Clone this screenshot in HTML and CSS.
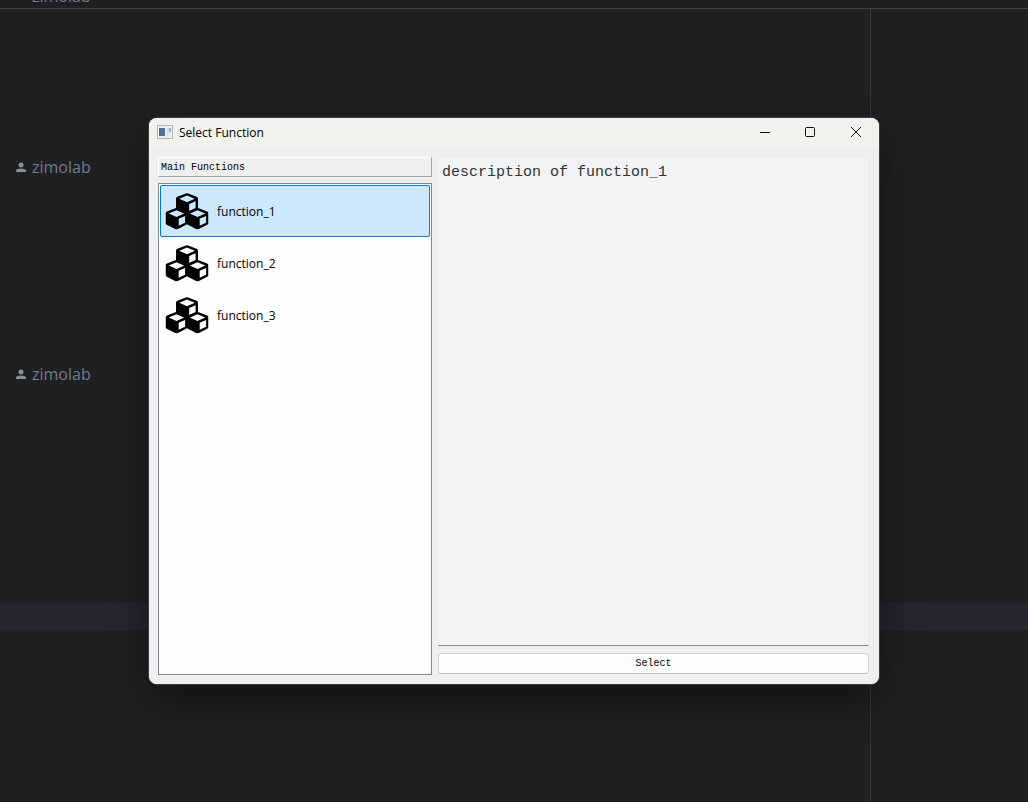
FILE: index.html
```html
<!DOCTYPE html>
<html lang="en">
<head>
<meta charset="utf-8">
<title>Select Function</title>
<link rel="stylesheet" href="styles.css">
</head>
<body>
<svg class="defs" aria-hidden="true">
  <symbol id="person" viewBox="0 0 10 10">
    <circle cx="5" cy="3" r="2.500"/>
    <path d="M0 10V8.600C0 7.100 2.600 6.400 5 6.400s5 .7 5 2.200V10z"/>
  </symbol>
  <symbol id="cube" viewBox="0 0 22 22">
    <path fill-rule="evenodd" d="M9.800 .4Q11 0 12.200 .4L20.600 3.700Q22 4.300 22 5.800V15Q22 16.400 20.700 17L12.400 21.200Q11 21.800 9.600 21.200L1.300 17Q0 16.400 0 15V5.800Q0 4.300 1.400 3.700ZM11 2.500 3.200 5.800 11 9.200 18.800 5.800ZM13.200 11 19.600 8.200V14.900L13.200 18Z"/>
  </symbol>
  <symbol id="cubes" viewBox="0 0 44 38">
    <use href="#cube" x="11" y="1" width="22" height="22"/>
    <use href="#cube" x="0.500" y="15.800" width="22" height="22"/>
    <use href="#cube" x="21.500" y="15.800" width="22" height="22"/>
  </symbol>
</svg>

<main class="editor">
  <div class="sticky-line"><span class="author">zimolab</span></div>
  <div class="code">
    <p class="author"><svg class="person"><use href="#person"/></svg>zimolab</p>
    <p class="author"><svg class="person"><use href="#person"/></svg>zimolab</p>
    <div class="current-line"></div>
    <div class="margin-guide"></div>
  </div>
</main>

<section class="dialog" role="dialog" aria-labelledby="dialog-title">
  <header class="titlebar">
    <svg class="app-icon" viewBox="0 0 16 14">
      <rect x=".5" y=".5" width="15" height="13" fill="#eef0f2" stroke="#b4b6b6"/>
      <rect x="2" y="3" width="6" height="8" fill="#56719a"/>
      <rect x="9" y="3" width="3" height="9" fill="#dfe2e8"/>
      <rect x="12" y="3" width="2" height="4" fill="#86b4dd"/>
    </svg>
    <h1 class="title" id="dialog-title">Select Function</h1>
    <button class="caption-button" aria-label="Minimize"><svg viewBox="0 0 12 12"><path d="M2 6.5h10"/></svg></button>
    <button class="caption-button" aria-label="Maximize"><svg viewBox="0 0 12 12"><rect x="1.5" y="1.5" width="9" height="9" rx="1"/></svg></button>
    <button class="caption-button" aria-label="Close"><svg viewBox="0 0 12 12"><path d="M1 1l10 10M11 1 1 11"/></svg></button>
  </header>
  <div class="content">
    <div class="column functions">
      <h2 class="group-label">Main Functions</h2>
      <div class="list" role="listbox" aria-label="Main Functions">
        <button class="item selected" role="option" aria-selected="true"><svg class="cubes"><use href="#cubes"/></svg>function_1</button>
        <button class="item" role="option" aria-selected="false"><svg class="cubes"><use href="#cubes"/></svg>function_2</button>
        <button class="item" role="option" aria-selected="false"><svg class="cubes"><use href="#cubes"/></svg>function_3</button>
      </div>
    </div>
    <div class="column details">
      <textarea class="description" aria-label="Description" readonly>description of function_1</textarea>
      <button class="select-button">Select</button>
    </div>
  </div>
</section>
</body>
</html>
```
FILE: styles.css
```css
* {
  box-sizing: border-box;
}

body {
  margin: 0;
  height: 100vh;
  overflow: hidden;
  background: #202022;
  font-family: "Open Sans", sans-serif;
}

.defs {
  position: absolute;
  width: 0;
  height: 0;
}

button {
  margin: 0;
  padding: 0;
  border: 0;
  background: none;
  color: inherit;
  font: inherit;
}

.editor {
  display: flex;
  flex-direction: column;
  height: 100%;
  border-bottom: 1px solid #1a171a;
}

.sticky-line {
  display: flex;
  align-items: flex-end;
  height: 9px;
  padding: 0 32px 1px;
  overflow: hidden;
  border-bottom: 1px solid #424244;
}

.code {
  position: relative;
  display: flex;
  flex: 1;
  flex-direction: column;
  padding-top: 144px;
}

.author {
  display: flex;
  align-items: center;
  gap: 6px;
  height: 27px;
  margin: 0 0 180px;
  padding-left: 16px;
  color: #707a90;
  font-size: 16px;
  line-height: 22px;
}

.sticky-line .author {
  height: auto;
  margin: 0;
  padding: 0;
}

.person {
  width: 10px;
  height: 10px;
  fill: #868f9c;
}

.current-line {
  height: 27px;
  margin-top: 36px;
  background: #26262f;
}

.margin-guide {
  position: absolute;
  top: 0;
  right: 157px;
  bottom: 0;
  width: 1px;
  background: #3a3a3d;
}

.dialog {
  position: absolute;
  inset: 118px 149px;
  display: flex;
  flex-direction: column;
  overflow: hidden;
  border-radius: 8px;
  background: #efefee;
  box-shadow: 0 0 0 1px #3c3c40, 0 16px 40px rgba(0, 0, 0, 0.45);
  color: #000;
}

.titlebar {
  display: flex;
  align-items: center;
  height: 28px;
  padding-left: 8px;
  background: #f0f3eb;
}

.app-icon {
  width: 16px;
  height: 14px;
}

.title {
  flex: 1;
  margin: 0 0 0 6px;
  font-size: 12px;
  font-weight: 400;
}

.caption-button {
  display: flex;
  align-items: center;
  justify-content: center;
  width: 46px;
  height: 28px;
}

.caption-button svg {
  width: 12px;
  height: 12px;
  fill: none;
  stroke: #111;
}

.content {
  flex: 1;
  display: grid;
  grid-template-columns: 274fr 431fr;
  gap: 6px;
  min-height: 0;
  padding: 11px 10px 9px 9px;
  background: linear-gradient(#f0f3eb 2px, #efefee 2px);
}

.column {
  display: flex;
  flex-direction: column;
  gap: 6px;
  min-width: 0;
}

.group-label {
  height: 20px;
  margin: 0;
  padding-left: 2px;
  border: 1px solid #a8a4a0;
  border-top-color: #fff;
  border-left-color: #fff;
  font: 10px/20px "Liberation Mono", monospace;
}

.list {
  flex: 1;
  padding: 1px;
  border: 1px solid #828790;
  background: #fefefe;
}

.item {
  display: flex;
  align-items: center;
  gap: 8px;
  width: 100%;
  height: 52px;
  padding-left: 4px;
  border: 1px solid transparent;
  border-radius: 2px;
  font-size: 12px;
}

.item.selected {
  border-color: #0078d4;
  background: #cce8ff;
}

.cubes {
  width: 44px;
  height: 38px;
}

.details {
  gap: 7px;
  padding-bottom: 1px;
}

.description {
  flex: 1;
  width: 100%;
  margin: 0;
  padding: 5px 4px;
  border: 1px solid #e9ecec;
  border-bottom-color: #868686;
  border-left: 0;
  background: #f1f3f5;
  color: #333;
  font: 15px/20px "Liberation Mono", monospace;
  resize: none;
  outline: none;
}

.select-button {
  height: 21px;
  border: 1px solid #d0d0d0;
  border-bottom-color: #bababa;
  border-radius: 4px;
  background: #fdfdfd;
  font: 10px/19px "Liberation Mono", monospace;
}
```
